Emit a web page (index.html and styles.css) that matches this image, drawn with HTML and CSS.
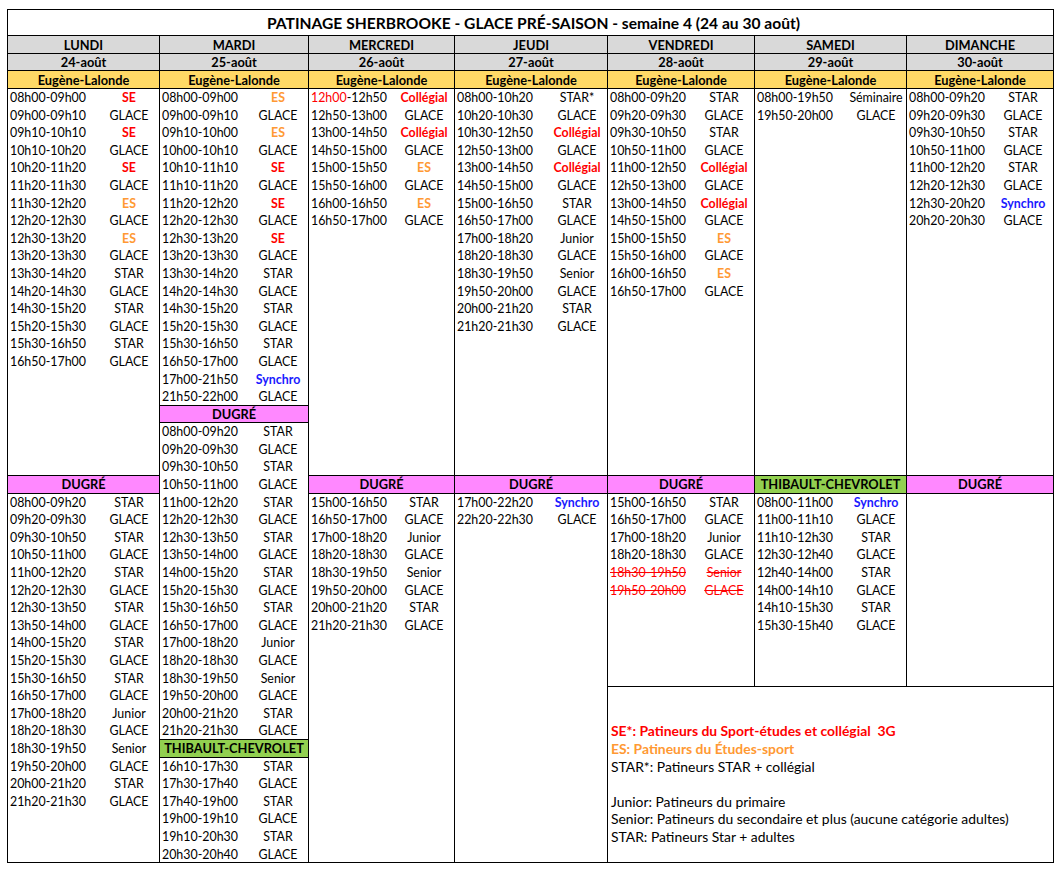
FILE: index.html
```html
<!DOCTYPE html>
<html lang="fr">
<head>
<meta charset="utf-8">
<title>Patinage Sherbrooke - Glace pré-saison</title>
<link rel="stylesheet" href="styles.css">
</head>
<body>
<div class="sheet">
  <div class="title">PATINAGE SHERBROOKE - GLACE PRÉ-SAISON - semaine 4 (24 au 30 août)</div>

  <div class="day c1">LUNDI</div>
  <div class="day c2">MARDI</div>
  <div class="day c3">MERCREDI</div>
  <div class="day c4">JEUDI</div>
  <div class="day c5">VENDREDI</div>
  <div class="day c6">SAMEDI</div>
  <div class="day c7">DIMANCHE</div>

  <div class="date c1">24-août</div>
  <div class="date c2">25-août</div>
  <div class="date c3">26-août</div>
  <div class="date c4">27-août</div>
  <div class="date c5">28-août</div>
  <div class="date c6">29-août</div>
  <div class="date c7">30-août</div>

  <div class="venue eug c1">Eugène-Lalonde</div>
  <div class="venue eug c2">Eugène-Lalonde</div>
  <div class="venue eug c3">Eugène-Lalonde</div>
  <div class="venue eug c4">Eugène-Lalonde</div>
  <div class="venue eug c5">Eugène-Lalonde</div>
  <div class="venue eug c6">Eugène-Lalonde</div>
  <div class="venue eug c7">Eugène-Lalonde</div>

  <!-- LUNDI -->
  <div class="block c1 r-top">
    <div class="row"><span class="t">08h00-09h00</span><span class="a se">SE</span></div>
    <div class="row"><span class="t">09h00-09h10</span><span class="a">GLACE</span></div>
    <div class="row"><span class="t">09h10-10h10</span><span class="a se">SE</span></div>
    <div class="row"><span class="t">10h10-10h20</span><span class="a">GLACE</span></div>
    <div class="row"><span class="t">10h20-11h20</span><span class="a se">SE</span></div>
    <div class="row"><span class="t">11h20-11h30</span><span class="a">GLACE</span></div>
    <div class="row"><span class="t">11h30-12h20</span><span class="a es">ES</span></div>
    <div class="row"><span class="t">12h20-12h30</span><span class="a">GLACE</span></div>
    <div class="row"><span class="t">12h30-13h20</span><span class="a es">ES</span></div>
    <div class="row"><span class="t">13h20-13h30</span><span class="a">GLACE</span></div>
    <div class="row"><span class="t">13h30-14h20</span><span class="a">STAR</span></div>
    <div class="row"><span class="t">14h20-14h30</span><span class="a">GLACE</span></div>
    <div class="row"><span class="t">14h30-15h20</span><span class="a">STAR</span></div>
    <div class="row"><span class="t">15h20-15h30</span><span class="a">GLACE</span></div>
    <div class="row"><span class="t">15h30-16h50</span><span class="a">STAR</span></div>
    <div class="row"><span class="t">16h50-17h00</span><span class="a">GLACE</span></div>
  </div>
  <div class="venue dug c1 r-h23">DUGRÉ</div>
  <div class="block c1 r-low">
    <div class="row"><span class="t">08h00-09h20</span><span class="a">STAR</span></div>
    <div class="row"><span class="t">09h20-09h30</span><span class="a">GLACE</span></div>
    <div class="row"><span class="t">09h30-10h50</span><span class="a">STAR</span></div>
    <div class="row"><span class="t">10h50-11h00</span><span class="a">GLACE</span></div>
    <div class="row"><span class="t">11h00-12h20</span><span class="a">STAR</span></div>
    <div class="row"><span class="t">12h20-12h30</span><span class="a">GLACE</span></div>
    <div class="row"><span class="t">12h30-13h50</span><span class="a">STAR</span></div>
    <div class="row"><span class="t">13h50-14h00</span><span class="a">GLACE</span></div>
    <div class="row"><span class="t">14h00-15h20</span><span class="a">STAR</span></div>
    <div class="row"><span class="t">15h20-15h30</span><span class="a">GLACE</span></div>
    <div class="row"><span class="t">15h30-16h50</span><span class="a">STAR</span></div>
    <div class="row"><span class="t">16h50-17h00</span><span class="a">GLACE</span></div>
    <div class="row"><span class="t">17h00-18h20</span><span class="a">Junior</span></div>
    <div class="row"><span class="t">18h20-18h30</span><span class="a">GLACE</span></div>
    <div class="row"><span class="t">18h30-19h50</span><span class="a">Senior</span></div>
    <div class="row"><span class="t">19h50-20h00</span><span class="a">GLACE</span></div>
    <div class="row"><span class="t">20h00-21h20</span><span class="a">STAR</span></div>
    <div class="row"><span class="t">21h20-21h30</span><span class="a">GLACE</span></div>
  </div>

  <!-- MARDI -->
  <div class="block c2 m-top">
    <div class="row"><span class="t">08h00-09h00</span><span class="a es">ES</span></div>
    <div class="row"><span class="t">09h00-09h10</span><span class="a">GLACE</span></div>
    <div class="row"><span class="t">09h10-10h00</span><span class="a es">ES</span></div>
    <div class="row"><span class="t">10h00-10h10</span><span class="a">GLACE</span></div>
    <div class="row"><span class="t">10h10-11h10</span><span class="a se">SE</span></div>
    <div class="row"><span class="t">11h10-11h20</span><span class="a">GLACE</span></div>
    <div class="row"><span class="t">11h20-12h20</span><span class="a se">SE</span></div>
    <div class="row"><span class="t">12h20-12h30</span><span class="a">GLACE</span></div>
    <div class="row"><span class="t">12h30-13h20</span><span class="a se">SE</span></div>
    <div class="row"><span class="t">13h20-13h30</span><span class="a">GLACE</span></div>
    <div class="row"><span class="t">13h30-14h20</span><span class="a">STAR</span></div>
    <div class="row"><span class="t">14h20-14h30</span><span class="a">GLACE</span></div>
    <div class="row"><span class="t">14h30-15h20</span><span class="a">STAR</span></div>
    <div class="row"><span class="t">15h20-15h30</span><span class="a">GLACE</span></div>
    <div class="row"><span class="t">15h30-16h50</span><span class="a">STAR</span></div>
    <div class="row"><span class="t">16h50-17h00</span><span class="a">GLACE</span></div>
    <div class="row"><span class="t">17h00-21h50</span><span class="a syn">Synchro</span></div>
    <div class="row"><span class="t">21h50-22h00</span><span class="a">GLACE</span></div>
  </div>
  <div class="venue dug c2 m-h19">DUGRÉ</div>
  <div class="block c2 m-mid">
    <div class="row"><span class="t">08h00-09h20</span><span class="a">STAR</span></div>
    <div class="row"><span class="t">09h20-09h30</span><span class="a">GLACE</span></div>
    <div class="row"><span class="t">09h30-10h50</span><span class="a">STAR</span></div>
    <div class="row"><span class="t">10h50-11h00</span><span class="a">GLACE</span></div>
    <div class="row"><span class="t">11h00-12h20</span><span class="a">STAR</span></div>
    <div class="row"><span class="t">12h20-12h30</span><span class="a">GLACE</span></div>
    <div class="row"><span class="t">12h30-13h50</span><span class="a">STAR</span></div>
    <div class="row"><span class="t">13h50-14h00</span><span class="a">GLACE</span></div>
    <div class="row"><span class="t">14h00-15h20</span><span class="a">STAR</span></div>
    <div class="row"><span class="t">15h20-15h30</span><span class="a">GLACE</span></div>
    <div class="row"><span class="t">15h30-16h50</span><span class="a">STAR</span></div>
    <div class="row"><span class="t">16h50-17h00</span><span class="a">GLACE</span></div>
    <div class="row"><span class="t">17h00-18h20</span><span class="a">Junior</span></div>
    <div class="row"><span class="t">18h20-18h30</span><span class="a">GLACE</span></div>
    <div class="row"><span class="t">18h30-19h50</span><span class="a">Senior</span></div>
    <div class="row"><span class="t">19h50-20h00</span><span class="a">GLACE</span></div>
    <div class="row"><span class="t">20h00-21h20</span><span class="a">STAR</span></div>
    <div class="row"><span class="t">21h20-21h30</span><span class="a">GLACE</span></div>
  </div>
  <div class="venue thib c2 m-h38">THIBAULT-CHEVROLET</div>
  <div class="block c2 m-low">
    <div class="row"><span class="t">16h10-17h30</span><span class="a">STAR</span></div>
    <div class="row"><span class="t">17h30-17h40</span><span class="a">GLACE</span></div>
    <div class="row"><span class="t">17h40-19h00</span><span class="a">STAR</span></div>
    <div class="row"><span class="t">19h00-19h10</span><span class="a">GLACE</span></div>
    <div class="row"><span class="t">19h10-20h30</span><span class="a">STAR</span></div>
    <div class="row"><span class="t">20h30-20h40</span><span class="a">GLACE</span></div>
  </div>

  <!-- MERCREDI -->
  <div class="block c3 r-top">
    <div class="row"><span class="t"><span class="red">12h00</span>-12h50</span><span class="a col">Collégial</span></div>
    <div class="row"><span class="t">12h50-13h00</span><span class="a">GLACE</span></div>
    <div class="row"><span class="t">13h00-14h50</span><span class="a col">Collégial</span></div>
    <div class="row"><span class="t">14h50-15h00</span><span class="a">GLACE</span></div>
    <div class="row"><span class="t">15h00-15h50</span><span class="a es">ES</span></div>
    <div class="row"><span class="t">15h50-16h00</span><span class="a">GLACE</span></div>
    <div class="row"><span class="t">16h00-16h50</span><span class="a es">ES</span></div>
    <div class="row"><span class="t">16h50-17h00</span><span class="a">GLACE</span></div>
  </div>
  <div class="venue dug c3 r-h23">DUGRÉ</div>
  <div class="block c3 r-low">
    <div class="row"><span class="t">15h00-16h50</span><span class="a">STAR</span></div>
    <div class="row"><span class="t">16h50-17h00</span><span class="a">GLACE</span></div>
    <div class="row"><span class="t">17h00-18h20</span><span class="a">Junior</span></div>
    <div class="row"><span class="t">18h20-18h30</span><span class="a">GLACE</span></div>
    <div class="row"><span class="t">18h30-19h50</span><span class="a">Senior</span></div>
    <div class="row"><span class="t">19h50-20h00</span><span class="a">GLACE</span></div>
    <div class="row"><span class="t">20h00-21h20</span><span class="a">STAR</span></div>
    <div class="row"><span class="t">21h20-21h30</span><span class="a">GLACE</span></div>
  </div>

  <!-- JEUDI -->
  <div class="block c4 r-top">
    <div class="row"><span class="t">08h00-10h20</span><span class="a">STAR*</span></div>
    <div class="row"><span class="t">10h20-10h30</span><span class="a">GLACE</span></div>
    <div class="row"><span class="t">10h30-12h50</span><span class="a col">Collégial</span></div>
    <div class="row"><span class="t">12h50-13h00</span><span class="a">GLACE</span></div>
    <div class="row"><span class="t">13h00-14h50</span><span class="a col">Collégial</span></div>
    <div class="row"><span class="t">14h50-15h00</span><span class="a">GLACE</span></div>
    <div class="row"><span class="t">15h00-16h50</span><span class="a">STAR</span></div>
    <div class="row"><span class="t">16h50-17h00</span><span class="a">GLACE</span></div>
    <div class="row"><span class="t">17h00-18h20</span><span class="a">Junior</span></div>
    <div class="row"><span class="t">18h20-18h30</span><span class="a">GLACE</span></div>
    <div class="row"><span class="t">18h30-19h50</span><span class="a">Senior</span></div>
    <div class="row"><span class="t">19h50-20h00</span><span class="a">GLACE</span></div>
    <div class="row"><span class="t">20h00-21h20</span><span class="a">STAR</span></div>
    <div class="row"><span class="t">21h20-21h30</span><span class="a">GLACE</span></div>
  </div>
  <div class="venue dug c4 r-h23">DUGRÉ</div>
  <div class="block c4 r-low">
    <div class="row"><span class="t">17h00-22h20</span><span class="a syn">Synchro</span></div>
    <div class="row"><span class="t">22h20-22h30</span><span class="a">GLACE</span></div>
  </div>

  <!-- VENDREDI -->
  <div class="block c5 r-top">
    <div class="row"><span class="t">08h00-09h20</span><span class="a">STAR</span></div>
    <div class="row"><span class="t">09h20-09h30</span><span class="a">GLACE</span></div>
    <div class="row"><span class="t">09h30-10h50</span><span class="a">STAR</span></div>
    <div class="row"><span class="t">10h50-11h00</span><span class="a">GLACE</span></div>
    <div class="row"><span class="t">11h00-12h50</span><span class="a col">Collégial</span></div>
    <div class="row"><span class="t">12h50-13h00</span><span class="a">GLACE</span></div>
    <div class="row"><span class="t">13h00-14h50</span><span class="a col">Collégial</span></div>
    <div class="row"><span class="t">14h50-15h00</span><span class="a">GLACE</span></div>
    <div class="row"><span class="t">15h00-15h50</span><span class="a es">ES</span></div>
    <div class="row"><span class="t">15h50-16h00</span><span class="a">GLACE</span></div>
    <div class="row"><span class="t">16h00-16h50</span><span class="a es">ES</span></div>
    <div class="row"><span class="t">16h50-17h00</span><span class="a">GLACE</span></div>
  </div>
  <div class="venue dug c5 r-h23">DUGRÉ</div>
  <div class="block c5 r-mid">
    <div class="row"><span class="t">15h00-16h50</span><span class="a">STAR</span></div>
    <div class="row"><span class="t">16h50-17h00</span><span class="a">GLACE</span></div>
    <div class="row"><span class="t">17h00-18h20</span><span class="a">Junior</span></div>
    <div class="row"><span class="t">18h20-18h30</span><span class="a">GLACE</span></div>
    <div class="row struck"><span class="t">18h30-19h50</span><span class="a">Senior</span></div>
    <div class="row struck"><span class="t">19h50-20h00</span><span class="a">GLACE</span></div>
  </div>

  <!-- SAMEDI -->
  <div class="block c6 r-top">
    <div class="row"><span class="t">08h00-19h50</span><span class="a">Séminaire</span></div>
    <div class="row"><span class="t">19h50-20h00</span><span class="a">GLACE</span></div>
  </div>
  <div class="venue thib c6 r-h23">THIBAULT-CHEVROLET</div>
  <div class="block c6 r-mid">
    <div class="row"><span class="t">08h00-11h00</span><span class="a syn">Synchro</span></div>
    <div class="row"><span class="t">11h00-11h10</span><span class="a">GLACE</span></div>
    <div class="row"><span class="t">11h10-12h30</span><span class="a">STAR</span></div>
    <div class="row"><span class="t">12h30-12h40</span><span class="a">GLACE</span></div>
    <div class="row"><span class="t">12h40-14h00</span><span class="a">STAR</span></div>
    <div class="row"><span class="t">14h00-14h10</span><span class="a">GLACE</span></div>
    <div class="row"><span class="t">14h10-15h30</span><span class="a">STAR</span></div>
    <div class="row"><span class="t">15h30-15h40</span><span class="a">GLACE</span></div>
  </div>

  <!-- DIMANCHE -->
  <div class="block c7 r-top">
    <div class="row"><span class="t">08h00-09h20</span><span class="a">STAR</span></div>
    <div class="row"><span class="t">09h20-09h30</span><span class="a">GLACE</span></div>
    <div class="row"><span class="t">09h30-10h50</span><span class="a">STAR</span></div>
    <div class="row"><span class="t">10h50-11h00</span><span class="a">GLACE</span></div>
    <div class="row"><span class="t">11h00-12h20</span><span class="a">STAR</span></div>
    <div class="row"><span class="t">12h20-12h30</span><span class="a">GLACE</span></div>
    <div class="row"><span class="t">12h30-20h20</span><span class="a syn">Synchro</span></div>
    <div class="row"><span class="t">20h20-20h30</span><span class="a">GLACE</span></div>
  </div>
  <div class="venue dug c7 r-h23">DUGRÉ</div>
  <div class="block c7 r-mid"></div>

  <!-- LÉGENDE -->
  <div class="legend">
    <div class="lrow lse">SE*: Patineurs du Sport-études et collégial&nbsp; 3G</div>
    <div class="lrow les">ES: Patineurs du Études-sport</div>
    <div class="lrow">STAR*: Patineurs STAR + collégial</div>
    <div class="lrow"></div>
    <div class="lrow">Junior: Patineurs du primaire</div>
    <div class="lrow">Senior: Patineurs du secondaire et plus (aucune catégorie adultes)</div>
    <div class="lrow">STAR: Patineurs Star + adultes</div>
  </div>
</div>
</body>
</html>
```

FILE: styles.css
```css
html, body {
  margin: 0;
  padding: 0;
  background: #ffffff;
}

body {
  font-family: Lato, "Open Sans", "Liberation Sans", sans-serif;
  font-size: 12.4px;
  color: #000000;
}

.sheet {
  display: grid;
  width: max-content;
  margin: 9px 0 0 7px;
  grid-template-columns: 152px 149px 146px 153px 147px 152px 147px;
  grid-template-rows: 26px 18px 17px 18px repeat(44, 17.6px);
  border-top: 1px solid #000;
  border-left: 1px solid #000;
}

.sheet > div {
  box-sizing: border-box;
  border-right: 1px solid #000;
  border-bottom: 1px solid #000;
  min-width: 0;
}

.title {
  grid-column: 1 / -1;
  grid-row: 1;
  display: flex;
  align-items: center;
  justify-content: center;
  font-weight: 700;
  font-size: 15.6px;
  padding: 1px 0 0 6px;
}

.day, .date, .venue {
  display: flex;
  align-items: center;
  justify-content: center;
  font-weight: 700;
  font-size: 12.8px;
}

.day { grid-row: 2; background: #d9d9d9; }
.date { grid-row: 3; background: #d9d9d9; }
.venue { grid-row: 4; }
.eug { background: #ffd966; }
.dug { background: #ff88ff; }
.thib { background: #92d050; }

.c1 { grid-column: 1; }
.c2 { grid-column: 2; }
.c3 { grid-column: 3; }
.c4 { grid-column: 4; }
.c5 { grid-column: 5; }
.c6 { grid-column: 6; }
.c7 { grid-column: 7; }

/* standard columns: Eugène rows 1-22, header row 23, then rows 24-44 */
.r-top { grid-row: 5 / span 22; }
.venue.r-h23 { grid-row: 27; }
.r-low { grid-row: 28 / span 21; }
.r-mid { grid-row: 28 / span 11; }

/* Mardi: Eugène rows 1-18, Dugré header 19, rows 20-37, Thibault header 38, rows 39-44 */
.m-top { grid-row: 5 / span 18; }
.venue.m-h19 { grid-row: 23; }
.m-mid { grid-row: 24 / span 18; }
.venue.m-h38 { grid-row: 42; }
.m-low { grid-row: 43 / span 6; }

.block {
  display: flex;
  flex-direction: column;
}

.row {
  display: flex;
  height: 17.6px;
  line-height: 17.6px;
  flex: none;
  white-space: nowrap;
}

.t {
  flex: 1;
  padding-left: 2px;
}

.a {
  width: 60px;
  text-align: center;
  flex: none;
}

.se { color: #ff0000; font-weight: 700; }
.es { color: #ff9933; font-weight: 700; }
.col { color: #ff0000; font-weight: 700; }
.syn { color: #1a1aff; font-weight: 700; }
.red { color: #ff0000; }

.struck {
  color: #ff0000;
  text-decoration: line-through;
}

.struck .t, .struck .a {
  text-decoration: line-through;
}

.legend {
  grid-column: 5 / span 3;
  grid-row: 39 / span 10;
  padding-top: 35.2px;
  padding-left: 3px;
  font-size: 13.9px;
}

.lrow {
  height: 17.6px;
  line-height: 17.6px;
  white-space: nowrap;
}

.lse { color: #ff0000; font-weight: 700; }
.les { color: #ff9933; font-weight: 700; }
```
